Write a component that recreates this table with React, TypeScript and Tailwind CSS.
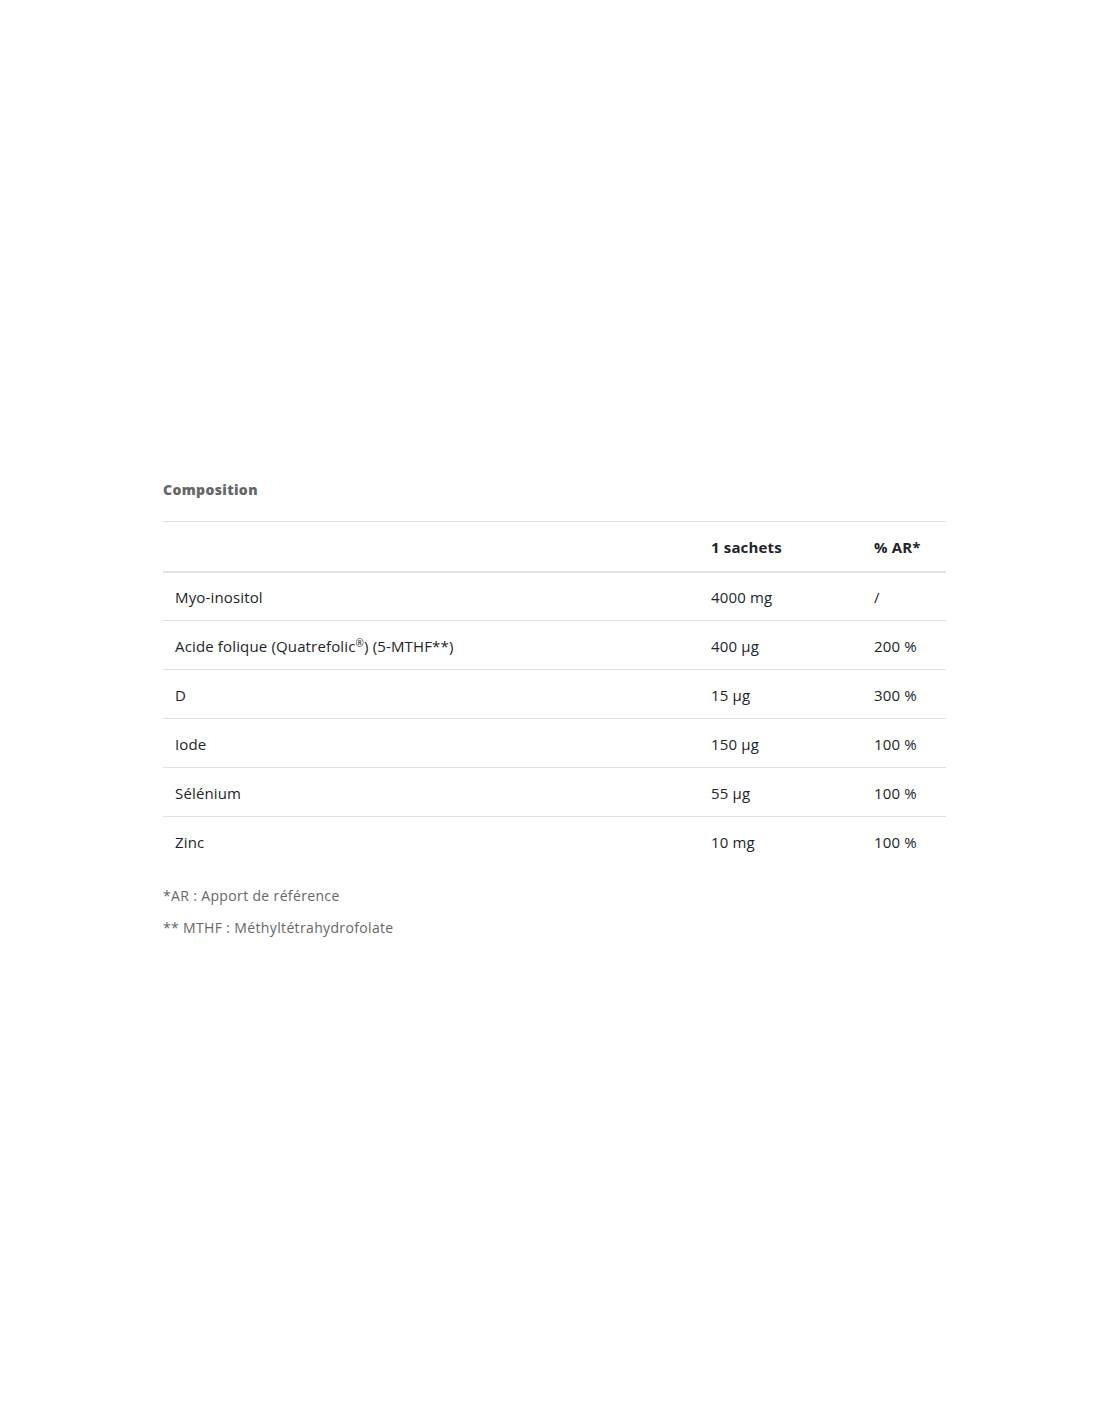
import React from "react";

const rows = [
  { name: <>Myo-inositol</>, qty: "4000 mg", ar: "/" },
  {
    name: (
      <>
        Acide folique (Quatrefolic<sup className="text-[10px]">®</sup>) (5-MTHF**)
      </>
    ),
    qty: "400 µg",
    ar: "200 %",
  },
  { name: <>D</>, qty: "15 µg", ar: "300 %" },
  { name: <>Iode</>, qty: "150 µg", ar: "100 %" },
  { name: <>Sélénium</>, qty: "55 µg", ar: "100 %" },
  { name: <>Zinc</>, qty: "10 mg", ar: "100 %" },
];

const App = () => {
  return (
    <div className="min-h-[1422px] w-full bg-white pt-[480px]">
      <div className="w-[783px] ml-[163px]">
        <h2
          className="text-[14px] font-extrabold leading-5 tracking-[0.35px] text-[#666]"
          style={{ fontFamily: "'Open Sans', 'Liberation Sans', sans-serif" }}
        >
          Composition
        </h2>

        <table
          className="mt-[21px] w-full border-collapse text-[15px] tracking-[0.15px] text-[#212529]"
          style={{ fontFamily: "'Open Sans', 'Noto Sans', sans-serif" }}
        >
          <thead>
            <tr className="h-[50px] border-t border-b-2 border-[#dee2e6]">
              <th className="w-[536px] px-3"></th>
              <th className="w-[163px] px-3 pt-[2px] text-left font-bold">1 sachets</th>
              <th className="px-3 pt-[2px] text-left font-bold">% AR*</th>
            </tr>
          </thead>
          <tbody>
            {rows.map((r, i) => (
              <tr
                key={i}
                className={
                  i < rows.length - 1
                    ? "h-[49px] border-b border-[#dee2e6]"
                    : "h-[49px]"
                }
              >
                <td className="px-3 pt-[2px] align-middle">{r.name}</td>
                <td className="px-3 pt-[2px] align-middle">{r.qty}</td>
                <td className="px-3 pt-[2px] align-middle">{r.ar}</td>
              </tr>
            ))}
          </tbody>
        </table>

        <div
          className="mt-[20px] flex flex-col gap-[12px] text-[14px] leading-5 tracking-[0.35px] text-[#666]"
          style={{ fontFamily: "'Open Sans', 'Liberation Sans', sans-serif" }}
        >
          <p>*AR : Apport de référence</p>
          <p>** MTHF : Méthyltétrahydrofolate</p>
        </div>
      </div>
    </div>
  );
};

export default App;
